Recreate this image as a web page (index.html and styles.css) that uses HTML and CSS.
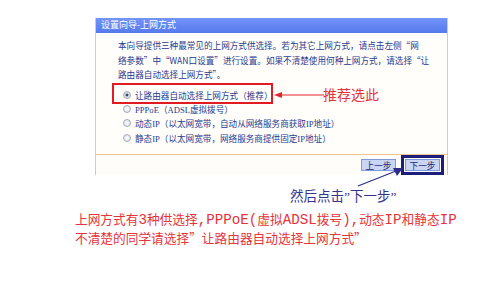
FILE: index.html
```html
<!DOCTYPE html>
<html lang="zh-CN">
<head>
    <meta charset="UTF-8">
    <meta name="viewport" content="width=device-width, initial-scale=1.0">
    <title>设置向导-上网方式</title>
    <link rel="stylesheet" href="styles.css">
</head>
<body>
    <div class="page">
        <div class="wizard">
            <div class="wizard-title">设置向导-上网方式</div>
            <div class="wizard-body">
                <p class="intro">本向导提供三种最常见的上网方式供选择。若为其它上网方式，请点击左侧“网<br>络参数”中“WAN口设置”进行设置。如果不清楚使用何种上网方式，请选择“让<br>路由器自动选择上网方式”。</p>
                <div class="options">
                    <div class="option"><span class="radio checked"></span>让路由器自动选择上网方式（推荐）</div>
                    <div class="option"><span class="radio"></span>PPPoE（ADSL虚拟拨号）</div>
                    <div class="option"><span class="radio"></span>动态IP（以太网宽带，自动从网络服务商获取IP地址）</div>
                    <div class="option"><span class="radio"></span>静态IP（以太网宽带，网络服务商提供固定IP地址）</div>
                </div>
            </div>
            <div class="wizard-foot">
                <button class="btn">上一步</button>
                <button class="btn btn-next">下一步</button>
            </div>
        </div>
        <div class="hint">然后点击”下一步”</div>
        <div class="note">上网方式有<span class="en">3</span>种供选择<span class="en">,PPPoE(</span>虚拟<span class="en">ADSL</span>拨号<span class="en">),</span>动态<span class="en">IP</span>和静态<span class="en">IP</span><br>不清楚的同学请选择”让路由器自动选择上网方式”</div>

        <!-- annotations drawn over the screenshot -->
        <div class="mark-box"></div>
        <svg class="arrow-red" width="50" height="10" viewBox="0 0 50 10">
            <line x1="4" y1="5" x2="50" y2="5" stroke="#e3242b" stroke-width="1.2"/>
            <polygon points="0,5 8,2 8,8" fill="#e3242b"/>
        </svg>
        <div class="mark-label">推荐选此</div>
        <svg class="arrow-blue" width="50" height="22" viewBox="0 0 50 22">
            <line x1="2" y1="20" x2="40" y2="5" stroke="#2d2d8c" stroke-width="1.2"/>
            <polygon points="47,2 37,2 41,10" fill="#2d2d8c"/>
        </svg>
    </div>
</body>
</html>
```

FILE: styles.css
```css
body {
    margin: 0;
    background: #fff;
    font-family: "Liberation Serif", "Noto Sans CJK SC", serif;
}
.page {
    position: relative;
    width: 500px;
    height: 306px;
    padding-top: 18px;
    box-sizing: border-box;
}
.wizard {
    margin-left: 95px;
    width: 353px;
    border-left: 1px solid #f2c58c;
    border-right: 1px solid #f2c58c;
    box-sizing: border-box;
}
.wizard-title {
    height: 15px;
    line-height: 15px;
    padding-left: 5px;
    font-size: 9px;
    color: #fff;
    background: linear-gradient(#7394f8, #5679ee);
}
.wizard-body {
    padding: 5px 6px 9px 22px;
    background: #fffefb;
    border-bottom: 1px solid #f2c58c;
}
.intro {
    margin: 0;
    font-family: "Noto Sans CJK SC", sans-serif;
    font-size: 8.6px;
    line-height: 14.5px;
    color: #1f3a8f;
    white-space: nowrap;
}
.options {
    margin-top: 6px;
    padding-left: 5px;
}
.option {
    display: flex;
    align-items: center;
    height: 14.3px;
    font-size: 8.6px;
    color: #1f3a8f;
    white-space: nowrap;
}
.radio {
    width: 6px;
    height: 6px;
    margin-right: 4px;
    border: 1px solid #a4acb8;
    border-radius: 50%;
    background: radial-gradient(#ffffff, #d5dae3);
}
.radio.checked {
    background: radial-gradient(#3b4763 30%, #d5dae3 40%);
}
.wizard-foot {
    height: 20px;
    display: flex;
    justify-content: flex-end;
    align-items: center;
    gap: 9px;
    padding-right: 7px;
    background: #fffdf9;
}
.btn {
    width: 35px;
    height: 12px;
    padding: 0;
    font-family: "Noto Sans CJK SC", sans-serif;
    font-size: 8.6px;
    line-height: 10px;
    color: #1c2a78;
    background: #c9d5f3;
    border: 1px solid #7f99dd;
}
.btn-next {
    outline: 3px solid #1d1d7c;
    outline-offset: 1px;
}
.hint {
    margin: 14px 0 0 290px;
    font-size: 13.5px;
    line-height: 16px;
    color: #34348f;
    white-space: nowrap;
}
.note {
    margin-top: 5px;
    padding-left: 75px;
    font-family: "Noto Sans CJK SC", sans-serif;
    font-size: 12.7px;
    line-height: 18px;
    color: #e5333a;
    white-space: nowrap;
}
.note .en {
    font-family: "Liberation Mono", monospace;
    font-size: 14.2px;
}
.mark-box {
    position: absolute;
    left: 112px;
    top: 83px;
    width: 157px;
    height: 17px;
    border: 2px solid #e21b23;
}
.arrow-red {
    position: absolute;
    left: 274px;
    top: 90px;
}
.mark-label {
    position: absolute;
    left: 323px;
    top: 85px;
    font-family: "Noto Sans CJK SC", sans-serif;
    font-size: 14px;
    line-height: 18px;
    color: #e5333a;
}
.arrow-blue {
    position: absolute;
    left: 356px;
    top: 166px;
}
```
